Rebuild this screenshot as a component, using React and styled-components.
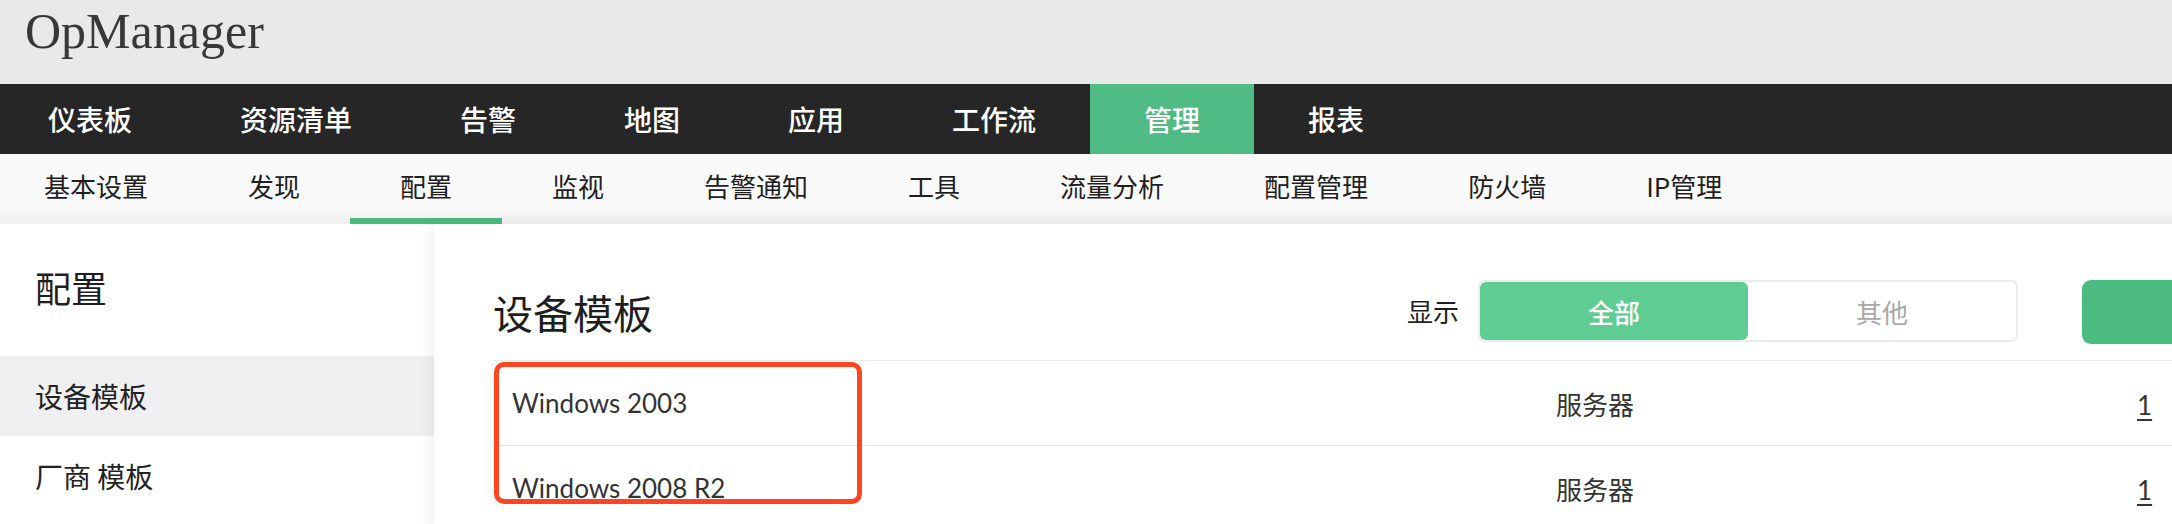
import styled, { createGlobalStyle } from "styled-components";

const GlobalStyle = createGlobalStyle`
  html, body {
    margin: 0;
    padding: 0;
    overflow: hidden;
    background: #ffffff;
  }
  body {
    font-family: "Noto Sans CJK SC", "Noto Sans", sans-serif;
    color: #222;
  }
`;

const Page = styled.div`
  width: 2420px;
  min-height: 524px;
  display: flex;
  flex-direction: column;
`;

const Header = styled.header`
  height: 84px;
  box-sizing: border-box;
  padding: 6px 0 0 25px;
  background: #e9e9ea;
`;

const Logo = styled.div`
  font-family: "Liberation Serif", serif;
  font-size: 50px;
  line-height: 50px;
  color: #383838;
`;

const MainNav = styled.nav`
  height: 70px;
  display: flex;
  background: #262626;
`;

const MainItem = styled.div`
  padding: 0 54px;
  line-height: 70px;
  font-size: 28px;
  font-weight: 500;
  color: #ffffff;
  background: ${(p) => (p.$active ? "#50bb84" : "transparent")};

  &:first-child {
    padding-left: 48px;
  }
`;

const SubNav = styled.nav`
  height: 70px;
  display: flex;
  background: linear-gradient(#f9f9f9 75%, #f0f0f0);
`;

const SubItem = styled.div`
  padding: 0 50px;
  height: 70px;
  box-sizing: border-box;
  line-height: 64px;
  font-size: 26px;
  color: #1e1e1e;
  border-bottom: 6px solid ${(p) => (p.$active ? "#4cb97f" : "transparent")};

  &:first-child {
    padding-left: 44px;
  }
`;

const Body = styled.div`
  display: grid;
  grid-template-columns: 434px 1fr;
  flex: 1;
`;

const Sidebar = styled.aside`
  background: #ffffff;
  padding-top: 38px;
`;

const SideTitle = styled.div`
  padding-left: 35px;
  font-size: 36px;
  line-height: 50px;
  margin-bottom: 44px;
  color: #1e1e1e;
`;

const SideItem = styled.div`
  height: 80px;
  line-height: 80px;
  padding-left: 35px;
  font-size: 28px;
  color: #222;
  background: ${(p) => (p.$active ? "#f0f0f2" : "transparent")};
`;

const Main = styled.main`
  position: relative;
  background: #ffffff;
  box-shadow: -6px 0 14px rgba(0, 0, 0, 0.05);
  padding: 56px 38px 0 59px;
`;

const MainHeader = styled.div`
  display: flex;
  align-items: flex-start;
  height: 64px;
  margin-bottom: 16px;
`;

const Title = styled.h1`
  flex: 1;
  margin: 0;
  font-size: 40px;
  font-weight: 400;
  line-height: 64px;
  color: #1e1e1e;
`;

const ShowLabel = styled.span`
  font-size: 26px;
  line-height: 62px;
  color: #1e1e1e;
  margin-right: 19px;
`;

const Toggle = styled.div`
  display: flex;
  width: 540px;
  height: 62px;
  box-sizing: border-box;
  border: 2px solid #ececec;
  border-radius: 7px;
  margin-right: 64px;
`;

const ToggleOption = styled.div`
  flex: 1;
  display: flex;
  align-items: center;
  justify-content: center;
  border-radius: 6px;
  font-size: 26px;
  font-weight: ${(p) => (p.$active ? 500 : 400)};
  color: ${(p) => (p.$active ? "#ffffff" : "#a8a8a8")};
  background: ${(p) => (p.$active ? "#5fcd93" : "transparent")};
`;

const AddButton = styled.button`
  width: 300px;
  height: 64px;
  flex-shrink: 0;
  border: none;
  border-radius: 9px;
  background: #4cbb82;
`;

const Table = styled.div`
  position: relative;
  border-top: 1px solid #ececec;
`;

const Row = styled.div`
  display: grid;
  grid-template-columns: 1044px 581px 1fr;
  align-items: center;
  height: 84px;
  padding-left: 19px;
  border-bottom: 1px solid #e4e4e4;
  font-size: 26px;
  color: #333;
`;

const NameCell = styled.div`
  font-family: Lato, "Noto Sans CJK SC", sans-serif;
`;

const TypeCell = styled.div``;

const CountCell = styled.a`
  font-family: Lato, sans-serif;
  color: #333;
  text-decoration: underline;
  text-underline-offset: 4px;
`;

const Highlight = styled.div`
  position: absolute;
  top: 1px;
  left: 1px;
  width: 368px;
  height: 142px;
  box-sizing: border-box;
  border: 5px solid #ff4422;
  border-radius: 10px;
  pointer-events: none;
`;

const mainNav = ["仪表板", "资源清单", "告警", "地图", "应用", "工作流", "管理", "报表"];
const subNav = ["基本设置", "发现", "配置", "监视", "告警通知", "工具", "流量分析", "配置管理", "防火墙", "IP管理"];
const templates = [
  { name: "Windows 2003", type: "服务器", count: 1 },
  { name: "Windows 2008 R2", type: "服务器", count: 1 },
];

const App = () => {
  return (
    <Page>
      <GlobalStyle />
      <Header>
        <Logo>OpManager</Logo>
      </Header>
      <MainNav>
        {mainNav.map((item) => (
          <MainItem key={item} $active={item === "管理"}>
            {item}
          </MainItem>
        ))}
      </MainNav>
      <SubNav>
        {subNav.map((item) => (
          <SubItem key={item} $active={item === "配置"}>
            {item}
          </SubItem>
        ))}
      </SubNav>
      <Body>
        <Sidebar>
          <SideTitle>配置</SideTitle>
          <SideItem $active>设备模板</SideItem>
          <SideItem>厂商 模板</SideItem>
        </Sidebar>
        <Main>
          <MainHeader>
            <Title>设备模板</Title>
            <ShowLabel>显示</ShowLabel>
            <Toggle>
              <ToggleOption $active>全部</ToggleOption>
              <ToggleOption>其他</ToggleOption>
            </Toggle>
            <AddButton aria-label="新建模板" />
          </MainHeader>
          <Table>
            {templates.map((t) => (
              <Row key={t.name}>
                <NameCell>{t.name}</NameCell>
                <TypeCell>{t.type}</TypeCell>
                <div>
                  <CountCell>{t.count}</CountCell>
                </div>
              </Row>
            ))}
            <Highlight />
          </Table>
        </Main>
      </Body>
    </Page>
  );
};

export default App;
